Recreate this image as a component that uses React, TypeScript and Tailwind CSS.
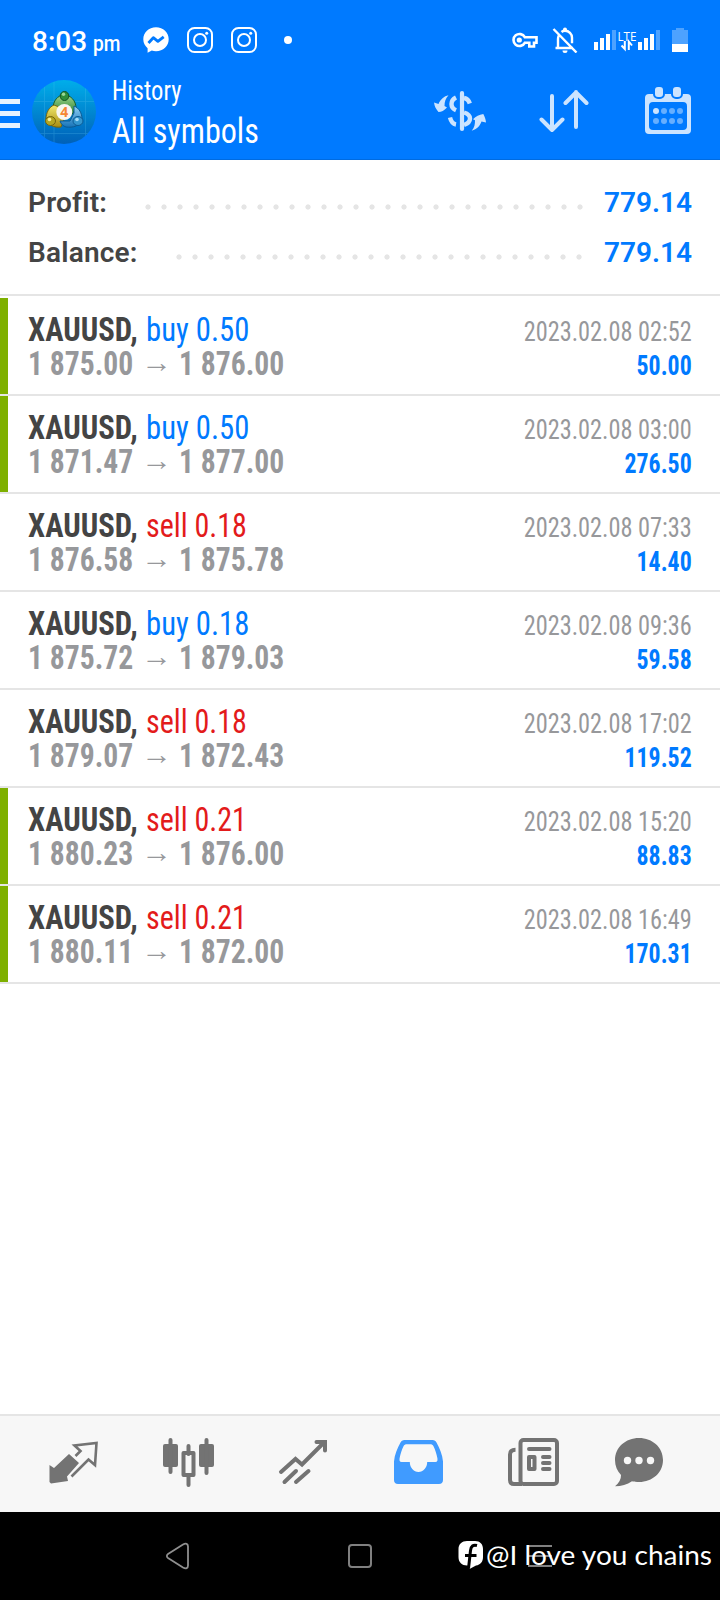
import React from "react";

// Closed deals in the order they are listed
const deals = [
  { side: "buy", volume: "0.50", open: "1 875.00", close: "1 876.00", time: "2023.02.08 02:52", profit: "50.00", marked: true },
  { side: "buy", volume: "0.50", open: "1 871.47", close: "1 877.00", time: "2023.02.08 03:00", profit: "276.50", marked: true },
  { side: "sell", volume: "0.18", open: "1 876.58", close: "1 875.78", time: "2023.02.08 07:33", profit: "14.40", marked: false },
  { side: "buy", volume: "0.18", open: "1 875.72", close: "1 879.03", time: "2023.02.08 09:36", profit: "59.58", marked: false },
  { side: "sell", volume: "0.18", open: "1 879.07", close: "1 872.43", time: "2023.02.08 17:02", profit: "119.52", marked: false },
  { side: "sell", volume: "0.21", open: "1 880.23", close: "1 876.00", time: "2023.02.08 15:20", profit: "88.83", marked: true },
  { side: "sell", volume: "0.21", open: "1 880.11", close: "1 872.00", time: "2023.02.08 16:49", profit: "170.31", marked: true },
];

const Instagram = () => (
  <svg width="26" height="26" viewBox="0 0 26 26" fill="none" stroke="#fff" strokeWidth="2">
    <rect x="1" y="1" width="24" height="24" rx="6.5" />
    <circle cx="13" cy="13" r="6" />
    <circle cx="19.7" cy="6.3" r="1.5" fill="#fff" stroke="none" />
  </svg>
);

const Messenger = () => (
  <svg width="26" height="26" viewBox="0 0 26 26">
    <path d="M13 0.3C5.8 0.3 0.3 5.5 0.3 12.3c0 3.8 1.7 6.7 4.3 8.9V25.7l4.2-2.1c1.3.4 2.7.6 4.2.6 7.2 0 12.7-5.2 12.7-12S20.2.3 13 .3z" fill="#fff" />
    <path d="M5.5 16l4.8-5.3 4.6 3.7 5.8-4.6" fill="none" stroke="#007aff" strokeWidth="2.8" strokeLinejoin="round" />
  </svg>
);

const SignalBars = () => (
  <svg width="22" height="20" viewBox="0 0 22 20" fill="#fff">
    <rect x="0" y="12" width="4" height="8" />
    <rect x="6" y="8" width="4" height="12" />
    <rect x="12" y="4" width="4" height="16" />
    <rect x="18" y="0" width="4" height="20" opacity="0.3" />
  </svg>
);

const StatusBar = () => (
  <div className="flex h-20 items-start pl-8 pr-8 text-white">
    <div className="w-[111px] pt-[25px] leading-[34px] whitespace-nowrap">
      <span className="text-[28px] font-medium">8:03</span>
      <span className="ml-[6px] inline-block origin-left scale-x-[0.87] text-[22px] font-medium">pm</span>
    </div>
    <div className="flex items-center gap-[18px] pt-[27px]">
      <Messenger />
      <Instagram />
      <Instagram />
      <span className="ml-[9px] h-2 w-2 rounded-full bg-white" />
    </div>
    <div className="ml-auto flex pt-[27px]">
      <svg width="26" height="26" viewBox="0 0 26 26" fill="none" stroke="#fff" strokeWidth="2.6">
        <path d="M12.8 10.2a6 6 0 1 0 0 5.6h4.5v3.7h4.7v-3.7h2.5v-5.6z" />
        <circle cx="7.3" cy="13" r="1.3" />
      </svg>
      <svg className="ml-[14px]" width="26" height="26" viewBox="0 0 26 26" fill="none" stroke="#fff" strokeWidth="2.4">
        <path d="M1.5 2l23 23.5M3.5 21h17.5M6 21v-9c0-1.5.3-2.5.8-3.5M9.5 5c1-.8 2.2-1.2 3.5-1.2 4 0 7 3 7 7v5.5" />
        <path d="M11 4V2.5a2 2 0 0 1 4 0V4zM10.5 23.5h5a2.5 2.5 0 0 1-5 0z" fill="#fff" stroke="none" />
      </svg>
      <div className="ml-4 mt-[3px] flex">
        <SignalBars />
        <svg className="overflow-visible" width="22" height="20" viewBox="0 0 22 20">
          <text x="1.5" y="10.5" fontSize="13.5" fontWeight="500" textLength="19" lengthAdjust="spacingAndGlyphs" fill="#fff" fontFamily="Open Sans">LTE</text>
          <path d="M8.8 11v8L5.5 15.5M12.8 20v-8.5l3.2 4" fill="none" stroke="#fff" strokeWidth="2" />
        </svg>
        <SignalBars />
      </div>
      <svg className="ml-3 mt-px" width="16" height="24" viewBox="0 0 16 24" fill="#fff">
        <path d="M4 0h8v2h4v14H0V2h4z" opacity="0.3" />
        <rect y="16" width="16" height="8" />
      </svg>
    </div>
  </div>
);

const Logo = () => (
  <svg width="64" height="64" viewBox="0 0 64 64">
    <defs>
      <linearGradient id="sky" x1="0" y1="0" x2="0" y2="1">
        <stop offset="0" stopColor="#00aeea" />
        <stop offset="1" stopColor="#0061b8" />
      </linearGradient>
      <linearGradient id="green" x1="0" y1="0" x2="0" y2="1">
        <stop offset="0" stopColor="#a5d88f" />
        <stop offset="1" stopColor="#1e7a2c" />
      </linearGradient>
      <linearGradient id="gold" x1="0" y1="0" x2="0" y2="1">
        <stop offset="0" stopColor="#f2ea6e" />
        <stop offset="1" stopColor="#a88c12" />
      </linearGradient>
      <linearGradient id="blue" x1="0" y1="0" x2="0" y2="1">
        <stop offset="0" stopColor="#8fd0f5" />
        <stop offset="1" stopColor="#1673b8" />
      </linearGradient>
      <clipPath id="disc"><circle cx="32" cy="32" r="32" /></clipPath>
    </defs>
    <g clipPath="url(#disc)">
      <rect width="64" height="64" fill="url(#sky)" />
      <path d="M0 21.5h64M0 53.5h64M12.5 0v64M22 0v64M53.5 0v64" stroke="#5cc3f0" strokeWidth="0.8" opacity="0.3" />
    </g>
    <path d="M32 14.5c-6 1-11 6-11 14l5 7h13l5-7c0-8-5-13-12-14z" fill="url(#green)" stroke="#14602b" />
    <path d="M22 25c-5 2-8 8-8 14 2 6 8 9 15 8l4-10-6-10z" fill="url(#gold)" stroke="#75650f" />
    <path d="M42 26c5 2 8 7 8 13-2 7-9 9-16 8-3-1-5-3-6-6h10l4-8z" fill="url(#blue)" stroke="#0b5a94" />
    <ellipse cx="32.5" cy="16" rx="4.3" ry="4.5" fill="#2f8e3b" stroke="#125222" />
    <ellipse cx="18.5" cy="41" rx="5" ry="4.5" fill="#b5a622" stroke="#75650f" />
    <ellipse cx="46" cy="41" rx="5" ry="4.5" fill="#3396cf" stroke="#0b5a94" />
    <circle cx="31.5" cy="14.3" r="1.7" fill="#9ad798" />
    <circle cx="17.5" cy="39.5" r="1.8" fill="#f6ef9c" />
    <circle cx="45" cy="39.5" r="1.8" fill="#a6dcf8" />
    <circle cx="32.3" cy="32" r="8" fill="#f8f6f2" />
    <text x="32.3" y="37" textAnchor="middle" fontSize="14" fontWeight="700" fill="#f58634" fontFamily="Open Sans">4</text>
  </svg>
);

const AppHeader = () => (
  <div className="flex h-20 items-start border-b border-[#006be0] text-white">
    <div className="mt-[19px] flex flex-col gap-[7px]">
      <span className="h-[5px] w-5 bg-white/90" />
      <span className="h-[5px] w-5 bg-white/90" />
      <span className="h-[5px] w-5 bg-white/90" />
    </div>
    <div className="ml-3"><Logo /></div>
    <div className="ml-4 flex-1 whitespace-nowrap [font-stretch:75%]">
      <div className="-mt-1 origin-left scale-x-[0.91] text-[27px] leading-[30px]">History</div>
      <div className="origin-left scale-x-[0.918] pt-[6px] text-[35px] leading-[40px]">All symbols</div>
    </div>
    <div className="flex pr-[28px]">
      <svg className="mt-[10px]" width="54" height="42" viewBox="433 90 54 42" fill="none" stroke="#cce4ff" strokeWidth="4.4">
        <path d="M462 93v36" strokeWidth="4.2" strokeLinecap="round" />
        <path d="M456 97.5c-3 1.5-4.5 3.5-4.5 6.5s1.5 5 4.5 6.3M464 98c2.8.5 4.8 2.3 5.8 5.5M464 112.5c4 1.2 6 3 6 6s-2 5-6 6.5M450 117.5c1 4 3 6.5 6 7" />
        <path d="M434 102.5l4.500 1.500c2-4.500 5.500-7.800 10-8.700-3 3.500-4 6.500-4 10.700l2.500 1.500c-3 3-5.500 4.500-8.500 4.500-2.500-3-4-5.500-4.500-9.500zM486 122.500l-4.500-1c-1.500 4.500-4.500 7.500-9.800 9.200 2.900-3.500 3.300-6.500 3.300-10.500l-2-1c3-3 6-4.500 10.300-5.200 1.400 2.500 2.400 5 2.700 8.500z" fill="#cce4ff" stroke="none" />
      </svg>
      <svg className="mt-[9px] ml-[52px]" width="50" height="44" viewBox="539 89 50 44" fill="none" stroke="#cce4ff" strokeWidth="4" strokeLinecap="round" strokeLinejoin="round">
        <path d="M552 96v34M541.5 119.5L552 130l10.5-10.5M576 127V92M565.5 103L576 92.5 586.5 103" />
      </svg>
      <svg className="mt-[6px] ml-[55px]" width="48" height="50" viewBox="644 86 48 50">
        <path d="M649 94h38a4 4 0 0 1 4 4v32a4 4 0 0 1-4 4h-38a4 4 0 0 1-4-4V98a4 4 0 0 1 4-4zm4 8a4 4 0 0 0-4 4v20a4 4 0 0 0 4 4h30a4 4 0 0 0 4-4v-20a4 4 0 0 0-4-4z" fill="#cce4ff" fillRule="evenodd" />
        <rect x="654" y="86" width="10" height="12" rx="4" fill="#cce4ff" stroke="#007aff" strokeWidth="2" />
        <rect x="672" y="86" width="10" height="12" rx="4" fill="#cce4ff" stroke="#007aff" strokeWidth="2" />
        <g fill="#66afff">
          <circle cx="656" cy="111" r="3" fill="#cce4ff" />
          <circle cx="664" cy="111" r="3" />
          <circle cx="672" cy="111" r="3" />
          <circle cx="680" cy="111" r="3" />
          <circle cx="656" cy="121" r="3" />
          <circle cx="664" cy="121" r="3" />
          <circle cx="672" cy="121" r="3" />
          <circle cx="680" cy="121" r="3" />
        </g>
      </svg>
    </div>
  </div>
);

const Summary = () => (
  <div className="border-b-2 border-[#e5e5e5] pt-[18px] pb-4 pl-7 pr-7 text-[28px] leading-[50px] font-semibold text-[#444]">
    <div className="flex h-[50px]">
      <span className="w-28 tracking-[0.2px]">Profit:</span>
      <span className="mt-[21px] h-4 w-[448px] bg-[radial-gradient(circle,#e5e5e5_2.2px,transparent_3px)] bg-[length:16px_16px]" />
      <span className="ml-auto text-[#007aff]">779.14</span>
    </div>
    <div className="flex h-[50px]">
      <span className="w-[142.5px] tracking-[0.2px]">Balance:</span>
      <span className="mt-[21px] h-4 w-[416px] bg-[radial-gradient(circle,#e5e5e5_2.2px,transparent_3px)] bg-[length:16px_16px]" />
      <span className="ml-auto text-[#007aff]">779.14</span>
    </div>
  </div>
);

const DealRow = ({ deal }: { deal: (typeof deals)[number] }) => (
  <div className="flex h-[98px] border-b-2 border-[#e5e5e5] pr-7 leading-[34px] whitespace-nowrap [font-stretch:75%]">
    <div className={deal.marked ? "w-2 bg-[#7eb000]" : "w-2"} />
    <div className="pt-[15px] pl-5 text-[33px]">
      <div className="flex">
        <span className="w-[118px] origin-left scale-x-[0.93] font-bold text-[#444]">XAUUSD,</span>
        <span className={deal.side === "buy" ? "origin-left scale-x-[0.93] text-[#007aff]" : "origin-left scale-x-[0.91] text-[#e31b1b]"}>
          {deal.side} {deal.volume}
        </span>
      </div>
      <div className="flex h-[34px] font-bold text-[#97989b]">
        <span className="w-[113px] origin-left scale-x-[0.897]">{deal.open}</span>
        <span className="-mt-[3px] w-[38px]">
          <span className="inline-block origin-left scale-x-[1.1] text-[28px] leading-[34px] font-bold">→</span>
        </span>
        <span className="origin-left scale-x-[0.897]">{deal.close}</span>
      </div>
    </div>
    <div className="ml-auto pt-[17px] text-right text-[27px]">
      <div className="origin-right scale-x-[0.9] text-[#97989b]">{deal.time}</div>
      <div className="origin-right scale-x-[0.883] font-bold text-[#007aff]">{deal.profit}</div>
    </div>
  </div>
);

const TabBar = () => (
  <div className="flex h-[98px] border-t-2 border-[#e5e5e5] bg-[#f7f7f7] pl-4">
    <svg width="115" height="96" viewBox="16 1416 115 96" fill="#737373">
      <path d="M69 1454l10 9-12 13.5 1 4.5-17 2.5-1.5-1.5v-17l4.5 3z" />
      <path d="M75.5 1456l5-5-6-5.5 22-2.500-1.500 22-6.500-5.500-17 17" fill="none" stroke="#737373" strokeWidth="2.6" />
    </svg>
    <svg width="115" height="96" viewBox="131 1416 115 96" fill="#737373">
      <rect x="163" y="1444" width="15" height="23" rx="2" />
      <rect x="199" y="1444" width="15" height="23" rx="2" />
      <path d="M170.5 1440v32M206.5 1440v33M188.5 1446v8M188.5 1476v9" stroke="#737373" strokeWidth="4" strokeLinecap="round" />
      <rect x="183.5" y="1453" width="10" height="22" fill="none" stroke="#737373" strokeWidth="4" strokeLinejoin="round" />
    </svg>
    <svg width="115" height="96" viewBox="246 1416 115 96" fill="none" stroke="#737373" strokeWidth="4" strokeLinecap="round">
      <path d="M281 1472l14.5-13 6.5 5.5 22.5-22.5M284.5 1482l11.5-11M296 1482l12.5-11M316.5 1442h8.5v8.5" />
    </svg>
    <svg width="115" height="96" viewBox="361 1416 115 96">
      <path d="M404.5 1440h28c2 0 3.3 1 4 2.5 3.2 5.5 6 12.5 6.5 19V1480c0 2.5-1.5 4-4 4h-41c-2.5 0-4-1.5-4-4v-18.5c.5-6.5 3.3-13.5 6.5-19 .7-1.5 2-2.5 4-2.5zm2.5 4.2c-1.8 0-2.7.5-3.5 2-1.8 3.8-3 7.5-3.9 12-.3 2.5 0 3.8 2 3.8h8.2c0 5.5 3.8 10 8.7 10s8.7-4.5 8.7-10h8.2c2 0 2.3-1.3 2-3.8-.9-4.5-2.1-8.2-3.9-12-.8-1.5-1.7-2-3.5-2z" fill="#409bff" fillRule="evenodd" />
    </svg>
    <svg width="115" height="96" viewBox="476 1416 115 96" fill="none" stroke="#737373" strokeWidth="4">
      <rect x="520.5" y="1440" width="36.5" height="44" rx="3" />
      <path d="M515.5 1449.8c-3.5 0-5.5 1.5-5.5 4.700V1480c0 2.500 1.500 4 4 4h8" />
      <path d="M529 1449h20.5M543 1457h6.5M543 1463h6.5M543 1469h6.5" strokeLinecap="round" />
      <rect x="529" y="1457" width="5.5" height="12" strokeLinejoin="round" />
    </svg>
    <svg width="115" height="96" viewBox="591 1416 115 96">
      <path d="M639 1438c13.5 0 24 9.5 24 22s-10.5 22-24 22c-2.5 0-5-.2-7-.8-5 3.5-10.5 5-17 5 4-3.2 6.2-7 6-11.2-3.8-4-6-9-6-15 0-12.5 10.5-22 24-22z" fill="#737373" />
      <circle cx="627.5" cy="1460.5" r="3.7" fill="#f7f7f7" />
      <circle cx="639" cy="1460.5" r="3.7" fill="#f7f7f7" />
      <circle cx="650.5" cy="1460.5" r="3.7" fill="#f7f7f7" />
    </svg>
  </div>
);

const SystemNav = () => (
  <div className="relative flex h-[88px] items-center bg-black pl-[165px]">
    <svg width="26" height="28" viewBox="165 1542 26 28" fill="none" stroke="#8f8f8f" strokeWidth="1.8">
      <path d="M168 1554l15-9.5c3-1.7 5-.7 5 2v19c0 2.7-2 3.7-5 2l-15-9.5c-1.5-1-1.5-3 0-4z" />
    </svg>
    <span className="ml-[157px] h-6 w-6 rounded border-2 border-[#808080]" />
    <span className="ml-[156px] flex w-6 flex-col gap-2">
      <i className="h-0.5 bg-[#808080]" />
      <i className="h-0.5 bg-[#808080]" />
      <i className="h-0.5 bg-[#808080]" />
    </span>
    <div className="absolute top-[27px] left-[458px] flex whitespace-nowrap text-white">
      <svg width="26" height="32" viewBox="458 1541 26 32">
        <path d="M467 1543h8c5 0 8 3 8 8v8c0 5-2.5 7.8-7 8.5l-6.5 3.5.5-3.5h-3c-5 0-8.5-3-8.5-8.5v-8c0-5 3.5-8 8.5-8z" fill="#fff" />
        <path d="M477 1547.5c-4-1-6 .5-6.5 5l-2 18M465 1557.5h11.5" fill="none" stroke="#000" strokeWidth="3" />
      </svg>
      <svg width="230" height="40" viewBox="484 1539 230 40">
        <text x="486" y="1564.5" textLength="226" lengthAdjust="spacingAndGlyphs" fontSize="27.5" fill="#fff" fontFamily="Lato">@I love you chains</text>
      </svg>
    </div>
  </div>
);

export default function App() {
  return (
    <div className="flex h-[1600px] w-[720px] flex-col overflow-hidden bg-white font-['Roboto',sans-serif]">
      <div className="bg-[#007aff]">
        <StatusBar />
        <AppHeader />
      </div>
      <Summary />
      <div className="flex-1 pt-0.5">
        {deals.map((deal) => (
          <DealRow key={deal.time} deal={deal} />
        ))}
      </div>
      <TabBar />
      <SystemNav />
    </div>
  );
}
